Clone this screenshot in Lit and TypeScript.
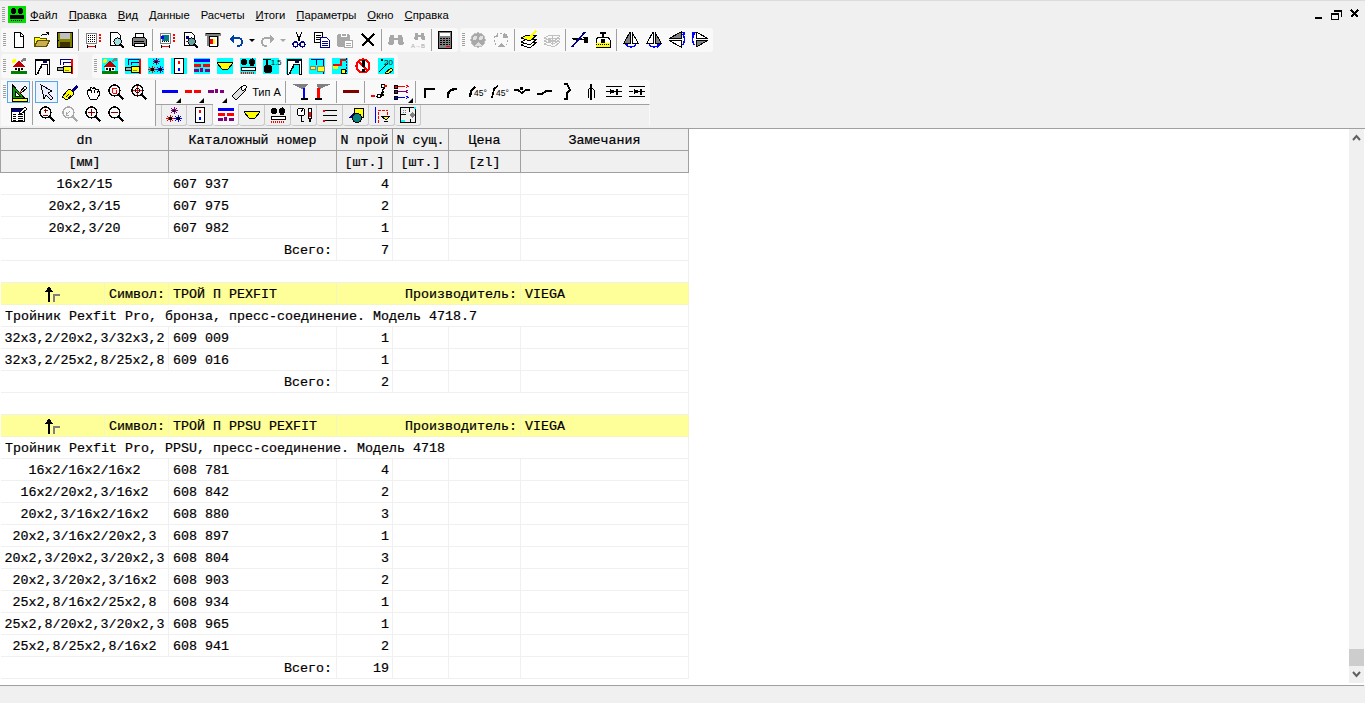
import { LitElement, html, svg, css, TemplateResult } from 'lit';
import { customElement } from 'lit/decorators.js';

const K = '#000';
const R = '#f00';
const B = '#00f';
const C = '#0ff';
const Y = '#ff0';
const G = '#808080';
const L = '#c0c0c0';
const M = '#800080';
const N = '#000080';
const P = '#a8a8a8';

const cy = (s: TemplateResult) => svg`<rect width="16" height="16" fill=${C}/>${s}`;

const mag = (inner: TemplateResult | string = '', c = K, fill = 'none') => svg`
  <circle cx="6.5" cy="6.5" r="5.5" fill=${fill} stroke=${c} stroke-width="1.4"/>
  <path d="M10.5 10.5l5 5" stroke=${c} stroke-width="2.4"/>${inner}`;

const house = svg`
  <circle cx="3" cy="3" r="2" fill=${Y}/><path d="M10 4l3-3M12 1h2v2" stroke=${G} stroke-width="1.5"/>
  <path d="M8 3l7 6H1z" fill="#c00000"/><rect x="3" y="9" width="10" height="4" fill="#fff"/>
  <rect x="7" y="10" width="2" height="3" fill=${K}/><rect x="4" y="10" width="2" height="2" fill=${K}/><rect x="10" y="10" width="2" height="2" fill=${K}/>
  <rect y="13" width="16" height="3" fill="#008000"/>`;
const plan = svg`
  <path d="M1 1h14v15h-2V6H8L3 16H1z" fill="#fff" stroke=${K}/><rect x="1" y="1" width="14" height="2" fill=${K}/>
  <path d="M8 8q-3 3-4 8M13 7v9" stroke=${K} fill="none"/><rect x="9" y="3" width="4" height="2" fill=${N}/>`;
const fit = svg`
  <path d="M3.500 7V1.500h11M6.500 7V4.500h8" stroke=${N} fill="none"/><path d="M14.500 1v15" stroke=${R} stroke-width="2"/>
  <rect x="6" y="8" width="8" height="6" fill=${Y} stroke=${K}/><rect x="0" y="9" width="6" height="3" fill="#b0b0a0" stroke=${K}/>
  <path d="M8 12h4" stroke=${G}/>`;
const stars = svg`
  <path d="M8 0v7M5 1l6 5M5 6l6-5M4.500 3.500h7" stroke=${M}/>
  <path d="M4 8v7M1 9l6 5M1 14l6-5M0 11.500h8" stroke=${R}/><path d="M12 8v7M9 9l6 5M9 14l6-5M8 11.500h8" stroke=${B}/>
  <rect x="7" y="3" width="2" height="2" fill=${K}/><rect x="3" y="10" width="3" height="3" fill=${K}/><rect x="11" y="10" width="3" height="3" fill=${K}/>`;
const door = svg`<rect x="3.500" y=".5" width="9" height="15" fill="#fff" stroke=${K}/><rect x="7" y="3" width="2" height="3" fill=${R}/><rect x="7" y="10" width="2" height="3" fill=${B}/>`;
const lines = svg`
  <rect y="1" width="16" height="3" fill=${B}/><rect y="6" width="7" height="3" fill=${R}/><rect x="9" y="6" width="7" height="3" fill=${R}/>
  <rect y="11" width="5" height="3" fill=${M}/><rect x="11" y="11" width="5" height="3" fill=${M}/>
  <path d="M6 14l1-4 1 4 1-4" stroke=${M} fill="none"/>`;
const bowl = svg`<path d="M0 4.500h16" stroke=${K}/><path d="M0 5h16L10 12H6z" fill=${Y}/><path d="M0 5l5 6h6l5-6" fill="none" stroke=${K}/>`;
const boiler = svg`
  <circle cx="4" cy="4" r="3.200" fill=${K}/><path d="M12 0l3 3-1 5h-4L9 3z" fill=${K}/><circle cx="12" cy="4" r="3.200" fill=${K}/>
  <rect x="1" y="9.500" width="14" height="3" fill="#fff" stroke=${K}/><path d="M1 14.500h14" stroke=${R} stroke-dasharray="1 1" stroke-width="2"/>`;
const gauge = svg`
  <circle cx="5" cy="5" r="4" fill="#fff" stroke=${K}/><path d="M5 5l2-3M5 9v5h3" stroke=${K} fill="none"/>
  <rect x="12" y="1" width="3" height="10" fill="#fff" stroke=${K}/><rect x="13" y="5" width="2" height="5" fill=${R}/><path d="M13.500 11v4" stroke=${K} stroke-width="2"/>`;
const list = svg`<path d="M1 3.500h14M1 8.500h14M1 13.500h14" stroke=${K} stroke-width="1.600"/><rect x="1" y="3" width="2" height="2" fill=${R}/><rect x="1" y="13" width="2" height="2" fill=${R}/>`;
const shapes = svg`
  <rect x="6" y="1" width="9" height="9" fill=${Y} stroke=${K}/><path d="M0 11l6-5v5z" fill=${N}/>
  <circle cx="9" cy="11" r="4.500" fill="#008080" stroke=${K}/>`;
const hydrant = svg`
  <path d="M1.500 0v16" stroke=${B}/><path d="M4.500 16V3h9v5" stroke=${R} fill="none" stroke-dasharray="3 1"/>
  <path d="M7 9h9l-4 4z" fill=${Y} stroke=${K}/><path d="M10 14h4" stroke=${K}/>`;
const floor = svg`
  <rect x=".5" y=".5" width="15" height="15" fill="#f0f0f0" stroke=${K}/><path d="M9.500 1v4M1 7.500h5M10 12v4" stroke=${K}/>
  <path d="M3 3h4M3 5h4" stroke=${G} stroke-dasharray="1 1"/><path d="M9 8l3-3 3 3-3 3z" fill=${G}/>
  <path d="M1 14h4M14 1h2" stroke=${C} stroke-width="2"/>`;
const page = svg`<path d="M2.500.5h7l3 3v10h-10z" fill="#fff" stroke=${K}/>`;
const gridp = svg`
  <rect x="1.500" y="1.500" width="10" height="10" fill="#fff" stroke=${G}/>
  <path d="M3 3.500h7M3 5.500h7M3 7.500h7M3 9.500h7" stroke=${K} stroke-dasharray="1 1"/>
  <path d="M14.500 2v8" stroke=${R} stroke-dasharray="2 1" stroke-width="2"/><path d="M2 14.500h9" stroke=${R}/>
  <path d="M2.500 13v3M10.500 13v3" stroke=${K}/>`;
const mirrorV = (flip: boolean) => svg`
  <g transform=${flip ? 'matrix(-1 0 0 1 16 0)' : ''}>
    <path d="M7 0L1 11h6z" fill=${G} stroke=${K}/><path d="M9 0l6 11H9z" fill="#fff" stroke=${K}/>
    <path d="M3 13q5 4 10 0" fill="none" stroke=${B} stroke-width="1.500"/><path d="M1 12h4v4z" fill=${B}/>
  </g>`;
const mirrorH = (flip: boolean) => svg`
  <g transform=${flip ? 'matrix(-1 0 0 1 16 0)' : ''}>
    <path d="M12 0L0 6.500h12z" fill=${flip ? '#fff' : G} stroke=${K}/><path d="M12 8.500H0L12 15z" fill=${flip ? G : '#fff'} stroke=${K}/>
    <path d="M14 2q3 5.500 0 11" fill="none" stroke=${B} stroke-width="1.600"/><path d="M12 0h4v4z" fill=${B}/>
  </g>`;
const t = (x: number, y: number, s: string, size = 7, c = K) =>
  svg`<text x=${x} y=${y} font-size=${size} fill=${c} font-family="Liberation Sans, sans-serif">${s}</text>`;
const bino = svg`
  <path d="M2 3h4v3h4V3h4l2 9h-6V8H6v4H0z" fill=${P}/><circle cx="3" cy="11" r="2.500" fill=${P}/><circle cx="13" cy="11" r="2.500" fill=${P}/>`;

const icons: Record<string, TemplateResult> = {
  new: svg`<path d="M3.500.5h6l3 3v12h-9z" fill="#fff" stroke=${K}/><path d="M9.500 1v3h3" fill="none" stroke=${K}/>`,
  open: svg`
    <path d="M.5 14.500V5.500h5l1 1h6v2" fill=${Y} stroke="#605000"/><path d="M.5 14.500l3-6h12l-3 6z" fill="#c8b050" stroke="#605000"/>
    <path d="M7 4q3-3 6-1" fill="none" stroke=${K}/><path d="M12 0h3v4z" fill=${K}/>`,
  save: svg`
    <rect x=".5" y=".5" width="15" height="15" fill="#808000" stroke=${K}/><rect x="3" y="1" width="10" height="6" fill=${L}/>
    <rect x="3" y="10" width="10" height="5" fill="#403000"/><rect x="1" y="8" width="1" height="1" fill=${K}/>`,
  gridp,
  prev: svg`${page}<g transform="translate(5 5) scale(.7)">${mag('', K, '#a0e0e0')}</g>`,
  print: svg`
    <path d="M4 1h8v5H4z" fill="#fff" stroke=${K}/><path d="M1 7l2-2h10l2 2v6H1z" fill=${G} stroke=${K}/>
    <rect x="3" y="9" width="10" height="1" fill=${K}/><rect x="3" y="11" width="10" height="3" fill="#fff" stroke=${K}/>`,
  gridc: svg`${gridp}<rect x="3" y="3" width="7" height="6" fill="#008080"/><rect x="2" y="4" width="3" height="3" fill=${B}/>`,
  prevc: svg`${page}<rect x="4" y="4" width="3" height="3" fill=${N}/><path d="M4 9h3" stroke=${R}/><g transform="translate(5 5) scale(.7)">${mag('', K, '#60a0a0')}</g>`,
  plot: svg`
    <path d="M0 1h16v3h-2v10h-2V4H4v10H2V4H0z" fill=${G}/><rect x="4" y="4" width="8" height="10" fill="#fff" stroke=${K}/>
    <rect x="5" y="7" width="3" height="5" fill=${R}/><rect x="8" y="7" width="2" height="5" fill=${Y}/><rect x="1" y="1" width="14" height="1" fill=${K}/>`,
  undo: svg`<path d="M5 6h6q4 1 3 5t-5 3" fill="none" stroke="#0040a0" stroke-width="1.600"/><path d="M1 7l5-4v8z" fill="#0040a0"/>`,
  redo: svg`<path d="M11 6H5q-4 1-3 5t5 3" fill="none" stroke=${P} stroke-width="1.600"/><path d="M15 7l-5-4v8z" fill=${P}/>`,
  cut: svg`
    <path d="M5 0l4 9M11 0L7 9" stroke=${K}/><circle cx="4.500" cy="12.500" r="2.500" fill="none" stroke=${N} stroke-width="1.300"/>
    <circle cx="11.500" cy="12.500" r="2.500" fill="none" stroke=${N} stroke-width="1.300"/>`,
  copy: svg`
    <rect x=".5" y=".5" width="8" height="10" fill="#fff" stroke=${K}/><path d="M2 3h5M2 5h5M2 7h5" stroke=${K}/>
    <path d="M6.500 5.500h6l3 3v7h-9z" fill="#fff" stroke=${N}/><path d="M8 9h6M8 11h6M8 13h6" stroke=${N}/>`,
  paste: svg`
    <rect x=".5" y="2.500" width="12" height="12" rx="2" fill=${P} stroke=${P}/><rect x="4" y="1" width="5" height="3" fill=${P} stroke="#fff"/>
    <rect x="7.500" y="8.500" width="8" height="7" fill="#fff" stroke=${P}/><path d="M9 11h5M9 13h5" stroke=${P}/>`,
  del: svg`<path d="M2 2l12 12M14 2L2 14" stroke=${K} stroke-width="2.400"/>`,
  find: bino,
  findr: svg`<g transform="translate(3 -1) scale(.7)">${bino}</g>${t(0, 16, 'A→B', 6, P)}`,
  calc: svg`
    <rect x="1.500" y="-.5" width="13" height="17" rx="1" fill=${G} stroke=${K}/><rect x="3" y="1" width="10" height="3" fill="#fff"/>
    <path d="M3 6.500h10M3 8.500h10M3 10.500h10M3 12.500h10" stroke=${K} stroke-dasharray="2 1"/><path d="M9 14.500h4" stroke=${R}/>`,
  ghost1: svg`<circle cx="8" cy="8" r="7.200" fill=${P} stroke=${L}/><circle cx="5" cy="6" r="2" fill="#e0e0e0"/><circle cx="11" cy="6" r="2" fill="#e0e0e0"/><path d="M4 14l4-4 4 4z" fill="#e0e0e0"/>`,
  ghost2: svg`<circle cx="8" cy="8" r="7" fill="none" stroke=${P} stroke-dasharray="2 2"/><circle cx="12" cy="4" r="2.500" fill=${P}/><circle cx="4" cy="4" r="1" fill=${P}/><path d="M4 15l4-4 4 4z" fill=${P}/>`,
  layers: svg`
    <path d="M0 13l6-3h10l-6 5H6z" fill="#fff" stroke=${K}/><path d="M0 10l6-3h10l-6 5H6z" fill="#fff" stroke=${K}/>
    <path d="M0 6l6-3h10l-6 5H6z" fill=${Y} stroke=${K}/><path d="M9 5l6-6" stroke=${Y} stroke-width="2.500"/>`,
  layersg: svg`
    <path d="M0 12l6-3 10 1-6 5z" fill="none" stroke=${L}/><path d="M0 9l6-3 10 1-6 5z" fill="none" stroke=${L}/><path d="M0 6l6-3 10 1-6 5z" fill="none" stroke=${L}/>
    <path d="M8 3v10M4 8h8" stroke=${L}/>`,
  tool: svg`
    <path d="M0 6h9l3-1h4v6h-4V8H1z" fill=${K}/><path d="M0 15L13 0" stroke=${N} stroke-width="1.800"/><rect x="10" y="6" width="2" height="1" fill="#fff"/>`,
  jar: svg`
    <path d="M3 5h10l2 3v7H1V8z" fill="#fff" stroke=${K}/><rect x="1" y="11" width="14" height="4" fill=${Y}/><path d="M1 12.500h14" stroke=${K} stroke-dasharray="1 1"/>
    <rect x="5" y="0" width="6" height="2" fill=${K}/><rect x="7" y="2" width="2" height="3" fill=${K}/><rect x="6" y="7" width="4" height="4" fill=${K}/>`,
  mv1: mirrorV(false),
  mv2: mirrorV(true),
  mh1: mirrorH(false),
  mh2: mirrorH(true),
  house,
  plan,
  fit,
  chouse: cy(house),
  cfit: cy(fit),
  cstars: cy(stars),
  cdoor: cy(door),
  clines: cy(lines),
  cbowl: cy(bowl),
  cboiler: cy(boiler),
  ct15: cy(svg`<path d="M0 1.500h8M4 2v6" stroke=${K} stroke-width="1.400"/><circle cx="5" cy="11" r="4.500" fill=${K}/>${t(8, 7, '1.5', 7.500)}`),
  cplan: cy(plan),
  cfit2: cy(svg`<path d="M1.500 1.500h13v14M7.500 1v6" stroke=${N} fill="none"/><rect x="8" y="8" width="7" height="5" fill=${Y} stroke=${G}/><rect x="1" y="8" width="5" height="3" fill=${Y} stroke=${G}/>`),
  criser: cy(svg`<path d="M1 7h8V2h3M12 2h2" stroke=${R} stroke-width="1.400" fill="none"/><path d="M14.500 0v16" stroke=${N} stroke-dasharray="2 1"/><rect x="9" y="11" width="4" height="4" fill=${Y} stroke=${K}/><rect x="1" y="8" width="5" height="3" fill=${Y}/>`),
  no: svg`<circle cx="8" cy="8" r="6.500" fill="#fff" stroke=${R} stroke-width="2.200"/><path d="M3 3l10 10" stroke=${R} stroke-width="2"/><rect x="7" y="2" width="3" height="7" fill=${K}/><rect x="7" y="11" width="3" height="3" fill=${K}/>`,
  cdim: cy(svg`<path d="M1 14L10 5" stroke=${K}/><path d="M7 15l6-5 2 2-5 4z" fill=${Y} stroke=${K}/><rect x="3" y="1" width="2" height="2" fill=${K}/>${t(6, 7, '20', 8)}`),
  draw: svg`
    <path d="M1.500 15V1l13 14z" fill="#00a000" stroke=${K}/><path d="M4 12V7l5 5z" fill="#f9f9f9" stroke=${K}/>
    <rect x="1" y="14" width="15" height="3" fill=${Y} stroke=${K}/><path d="M9 8l5-6 2 2-6 5z" fill="#fff" stroke=${K}/><path d="M9 8l1 1" stroke=${R} stroke-width="2"/>`,
  pick: svg`<path d="M2 1l11 6-4 2 5 5-2 2-5-5-2 4z" fill="#e8e8ff" stroke=${K}/>`,
  brush: svg`<path d="M9 6l5-5 2 2-5 5z" fill=${N}/><path d="M8 5l4 4-1 2-6 5-5-3 6-7z" fill=${Y} stroke=${K}/><path d="M7 10l-3 3M9 11l-3 3" stroke=${K}/>`,
  hand: svg`<path d="M2 8l2-3 1 2 1-4 2 2 1-2 2 3 2-1 2 5-3 5H5l-2-4z" fill="#fff" stroke=${K}/><path d="M6 6v3M9 6v3M12 7v2" stroke=${K}/>`,
  zsel: mag(svg`<path d="M4 9V4h5M5 9h3V6" stroke=${R} fill="none"/>`),
  zc: mag(svg`<path d="M6.500 2v9M2 6.500h9" stroke=${R} stroke-width="1.400"/><circle cx="6.500" cy="6.500" r="2" fill="none" stroke=${K}/>`),
  table: svg`
    <rect x=".5" y="2.500" width="13" height="13" fill="#fff" stroke=${K}/><rect x="1" y="3" width="12" height="3" fill=${N}/>
    <path d="M2 8h3M2 10h3M2 12h3M2 14h3M7 8h5M7 10h5M7 12h5M7 14h5" stroke=${K}/><path d="M8 7l6-6 2 2-6 5z" fill="#fff" stroke=${K}/>`,
  zpm: mag(svg`<path d="M6.500 2.500v4M4.500 4.500h4M4 9h5" stroke="#800000"/>`),
  zprev: mag(svg`<path d="M4 9l4-4M4 6v3h3" stroke=${P} fill="none"/>`, P),
  zplus: mag(svg`<path d="M6.500 3v7M3 6.500h7" stroke="#800000" stroke-width="1.300"/>`),
  zminus: mag(svg`<path d="M3 6.500h7" stroke="#800000" stroke-width="1.400"/>`),
  lblue: svg`<rect y="6" width="16" height="3" fill=${B}/>`,
  lred: svg`<rect y="6" width="7" height="3" fill=${R}/><rect x="9" y="6" width="7" height="3" fill=${R}/>`,
  lpur: svg`<rect y="6" width="6" height="3" fill=${M}/><rect x="12" y="6" width="4" height="3" fill=${M}/><path d="M7 9l1-4 1 4 1-4" stroke=${M} fill="none"/>`,
  pipe: svg`<path d="M1 12L11 2l4 4L5 16z" fill="#e0e0e0" stroke=${K}/><ellipse cx="13" cy="4" rx="2" ry="3" transform="rotate(45 13 4)" fill="#fff" stroke=${K}/>`,
  tb: svg`<path d="M0 0h16l-4 5h-2z" fill=${G}/><rect x="11" y="4" width="2" height="10" fill=${B}/><rect x="9" y="14" width="7" height="2" fill=${K}/>`,
  tr: svg`<path d="M2 0h14L5 5H3z" fill=${G}/><rect x="2" y="4" width="3" height="10" fill=${R}/><rect x="0" y="14" width="7" height="2" fill=${K}/>`,
  ldr: svg`<rect y="6" width="16" height="3" fill="#800000"/>`,
  node: svg`
    <path d="M2 12h5M9 12h3V4M12 4h2" stroke=${K} stroke-dasharray="2 1"/><rect x="0" y="11" width="4" height="2" fill=${R}/><rect x="6.500" y="10.500" width="3" height="3" fill="#fff" stroke=${K}/>
    <rect x="10.500" y=".5" width="3" height="3" fill="#fff" stroke=${K}/><rect x="13" y="1" width="3" height="2" fill=${R}/>`,
  tree: svg`
    <rect x="0" y="1" width="3" height="3" fill=${R} stroke=${K}/><rect x="0" y="6" width="3" height="3" fill=${M} stroke=${K}/><rect x="0" y="12" width="3" height="3" fill=${B} stroke=${K}/>
    <path d="M4 2.500h7M12 1l2 1.500-2 1.500" stroke=${R} fill="none"/><path d="M4 7.500h7M14 6l-2 1.500 2 1.500" stroke=${M} fill="none"/><path d="M4 13.500h7M12 12l2 1.500-2 1.500" stroke=${B} fill="none"/>`,
  c1: svg`<path d="M3 14V5h10" fill="none" stroke=${K} stroke-width="2.400"/>`,
  c2: svg`<path d="M3 14V11q0-6 9-6" fill="none" stroke=${K} stroke-width="2.400"/>`,
  a1: svg`<path d="M2 13l1-6 4-4" fill="none" stroke=${K} stroke-width="2.200"/>${t(6, 12, '45°', 8.500)}`,
  a2: svg`<path d="M1 14l2-9 4-3" fill="none" stroke=${K} stroke-width="1.800"/>${t(5, 12, '45°', 8.500)}`,
  dip: svg`<path d="M0 6h4l4 3 4-3h4" fill="none" stroke=${K} stroke-width="1.800"/><rect x="6" y="3" width="3" height="3" fill=${K}/>`,
  step: svg`<path d="M0 10h5l4-3h6" fill="none" stroke=${K} stroke-width="2"/>`,
  bend: svg`<path d="M4 0h3l3 6-3 3v6H4" fill="none" stroke=${K} stroke-width="2"/>`,
  valve: svg`<path d="M8 0v16" stroke=${K} stroke-width="2"/><path d="M5 14V6l3-3 3 3v8" fill="none" stroke=${K}/>`,
  v1: svg`<path d="M0 2.500h16M0 12.500h16M0 7.500h4M12 7.500h4" stroke=${K}/><path d="M4 5l6 2.500L4 10z" fill=${K}/><rect x="10" y="5" width="2" height="6" fill=${K}/>`,
  v2: svg`<path d="M0 2.500h16M0 12.500h16M0 7.500h4M12 7.500h4" stroke=${K}/><path d="M5 5l6 2.500L5 10z" fill=${K}/><rect x="11" y="5" width="2" height="6" fill=${K}/>`,
  symbol: svg`<path d="M3 16V6H0l4-6 4 6H5v10z" fill=${K}/><path d="M9 16V9h6" fill="none" stroke=${G} stroke-width="2"/>`,
};

const ic = (name: string) => html`<svg class="ic" viewBox="0 0 16 16" width="16" height="16">${icons[name]}</svg>`;

// toolbar token: icon name, '|' separator, '!' narrow separator, 'v'/'vg' drop arrow, '^x' icon with a corner mark
const bar = (items: string[]) => items.map((it) => {
  if (it === '|') return html`<span class="sep"></span>`;
  if (it === '!') return html`<span class="sep narrow"></span>`;
  if (it === 'v' || it === 'vg') return html`<span class="drop ${it === 'vg' ? 'off' : 'wide'}"></span>`;
  if (it === 'type') return html`<span class="typea">Тип А</span>`;
  if (it[0] === '^') return html`<span class="btn">${ic(it.slice(1))}<i class="mark"></i></span>`;
  if (it[0] === '*') return html`<span class="btn on">${ic(it.slice(1))}</span>`;
  return html`<span class="btn">${ic(it)}</span>`;
});

const menu = ['Файл', 'Правка', 'Вид', 'Данные', 'Расчеты', 'Итоги', 'Параметры', 'Окно', 'Справка'];

type Row =
  | { k: 'd'; dn: string; cat: string; n: string }
  | { k: 't'; n: string }
  | { k: 'b' }
  | { k: 's'; sym: string; mfr: string }
  | { k: 'x'; text: string };

const rows: Row[] = [
  { k: 'd', dn: '16x2/15', cat: '607 937', n: '4' },
  { k: 'd', dn: '20x2,3/15', cat: '607 975', n: '2' },
  { k: 'd', dn: '20x2,3/20', cat: '607 982', n: '1' },
  { k: 't', n: '7' },
  { k: 'b' },
  { k: 's', sym: 'ТРОЙ П PEXFIT', mfr: 'VIEGA' },
  { k: 'x', text: 'Тройник Pexfit Pro, бронза, пресс-соединение. Модель 4718.7' },
  { k: 'd', dn: '32x3,2/20x2,3/32x3,2', cat: '609 009', n: '1' },
  { k: 'd', dn: '32x3,2/25x2,8/25x2,8', cat: '609 016', n: '1' },
  { k: 't', n: '2' },
  { k: 'b' },
  { k: 's', sym: 'ТРОЙ П PPSU PEXFIT', mfr: 'VIEGA' },
  { k: 'x', text: 'Тройник Pexfit Pro, PPSU, пресс-соединение. Модель 4718' },
  { k: 'd', dn: '16x2/16x2/16x2', cat: '608 781', n: '4' },
  { k: 'd', dn: '16x2/20x2,3/16x2', cat: '608 842', n: '2' },
  { k: 'd', dn: '20x2,3/16x2/16x2', cat: '608 880', n: '3' },
  { k: 'd', dn: '20x2,3/16x2/20x2,3', cat: '608 897', n: '1' },
  { k: 'd', dn: '20x2,3/20x2,3/20x2,3', cat: '608 804', n: '3' },
  { k: 'd', dn: '20x2,3/20x2,3/16x2', cat: '608 903', n: '2' },
  { k: 'd', dn: '25x2,8/16x2/25x2,8', cat: '608 934', n: '1' },
  { k: 'd', dn: '25x2,8/20x2,3/20x2,3', cat: '608 965', n: '1' },
  { k: 'd', dn: '25x2,8/25x2,8/16x2', cat: '608 941', n: '2' },
  { k: 't', n: '19' },
];

const tabArt: TemplateResult[] = [stars, door, lines, bowl, boiler, gauge, list, shapes, hydrant, floor];

@customElement('app-root')
export class AppRoot extends LitElement {
  static styles = css`
    :host {
      display: flex;
      flex-direction: column;
      height: 703px;
      overflow: hidden;
      background: #f0f0f0;
      border-top: 1px solid #dcdcdc;
      box-sizing: border-box;
      font-family: 'Liberation Sans', sans-serif;
      color: #000;
    }
    .menubar {
      display: flex;
      align-items: center;
      height: 27px;
      flex: none;
      font-size: 11.25px;
    }
    .menubar .grip { height: 16px; margin: 0 3px 0 2px; }
    .logo { flex: none; width: 18px; height: 17px; margin-right: 4px; }
    .menu { white-space: nowrap; }
    .menu + .menu { margin-left: 11px; }
    .winctl { margin-left: auto; display: flex; }
    .winctl svg { display: block; }

    .tools { display: flex; flex: none; height: 24px; margin-bottom: 2px; padding-left: 1px; }
    .band {
      display: flex;
      align-items: center;
      background: #f9f9f9;
      border-radius: 3px;
      padding-right: 2px;
      height: 24px;
      box-sizing: border-box;
    }
    .band + .band { margin-left: 2px; }
    .band.apart { margin-left: 14px; padding-right: 1px; }
    .grip {
      flex: none;
      width: 3px;
      height: 14px;
      margin: 0 1px 0 2px;
      background: repeating-linear-gradient(#a0a0a0 0 1px, transparent 1px 2px);
    }
    .btn {
      position: relative;
      flex: none;
      width: 23px;
      height: 22px;
      display: flex;
      align-items: center;
      justify-content: center;
      box-sizing: border-box;
    }
    .btn.on { background: #eef4fc; border: 1px solid #55a5f0; }
    .ic { display: block; overflow: visible; shape-rendering: crispEdges; }
    .mark {
      position: absolute;
      right: 0;
      bottom: 0;
      border-style: solid;
      border-width: 0 0 5px 5px;
      border-color: transparent transparent #000 transparent;
    }
    .sep { flex: none; width: 5px; height: 22px; display: flex; justify-content: center; }
    .sep::before { content: ''; width: 1px; background: #a0a0a0; }
    .sep.narrow { width: 3px; }
    .drop { flex: none; width: 8px; display: flex; justify-content: center; }
    .drop.wide { width: 9px; }
    .drop::before {
      content: '';
      border-style: solid;
      border-width: 3px 3px 0 3px;
      border-color: #000 transparent transparent transparent;
    }
    .drop.off::before { border-top-color: #a8a8a8; }
    .typea { flex: none; width: 33px; font-size: 11px; text-align: center; white-space: nowrap; }

    .tools3 { display: flex; flex: none; height: 46px; margin-bottom: 2px; padding-left: 1px; }
    .left {
      flex: none;
      width: 154px;
      height: 45px;
      padding-top: 1px;
      background: #f9f9f9;
      border-right: 1px solid #a0a0a0;
      display: grid;
      grid-template-columns: 6px 23px 5px repeat(5, 23px);
      grid-template-rows: 22px 22px;
    }
    .left .grip { align-self: center; }
    .left .vsep { grid-column: 3; grid-row: 1 / 3; justify-self: center; width: 1px; background: #a0a0a0; }
    .right { flex: none; width: 494px; display: flex; flex-direction: column; }
    .top {
      display: flex;
      align-items: center;
      height: 24px;
      flex: none;
      background: #f9f9f9;
      padding-left: 2px;
      border-radius: 0 3px 0 0;
    }
    .tabs {
      flex: none;
      height: 21px;
      border-top: 1px solid #a0a0a0;
      border-right: 1px solid #f9f9f9;
      display: flex;
      padding-left: 5px;
    }
    .tab {
      flex: none;
      width: 26px;
      box-sizing: border-box;
      border: 1px solid #c8c8c8;
      border-top: 0;
      border-left: 0;
      border-radius: 0 0 3px 3px;
      display: flex;
      align-items: center;
      justify-content: center;
    }
    .tab:first-child { border-left: 1px solid #c8c8c8; }
    .tab.active { background: #f9f9f9; margin-top: -1px; }

    .main { flex: 1; min-height: 0; display: flex; background: #fff; border-top: 1px solid #a0a0a0; }
    .sheet {
      flex: 1;
      min-width: 0;
      overflow: hidden;
      font-family: 'Liberation Mono', monospace;
      font-size: 13.33px;
      -webkit-text-stroke: 0.2px #000;
    }
    .row {
      display: grid;
      grid-template-columns: 168px 168px 56px 56px 72px 168px;
      width: 688px;
      height: 22px;
      margin-left: 1px;
    }
    .cell {
      box-sizing: border-box;
      height: 22px;
      line-height: 23px;
      padding: 0 3px;
      white-space: pre;
      overflow: hidden;
      border-right: 1px solid #f0f0f0;
      border-bottom: 1px solid #f0f0f0;
    }
    .c { text-align: center; padding: 0; }
    .l { padding-left: 4px; }
    .r { text-align: right; }
    .w2 { grid-column: span 2; padding-right: 4px; }
    .all { grid-column: 1 / -1; }
    .head .cell { background: #f0f0f0; border-color: #a0a0a0; }
    .head { box-shadow: -1px 0 0 #a0a0a0; }
    .sym { grid-template-columns: 104px 64px 168px 184px 168px; background: #ff9; }
    .sym .cell { border-color: #f5f5c0; }
    .symicon { display: flex; align-items: center; justify-content: center; padding: 0; }

    .scroll { flex: none; width: 15px; margin: 0 1px 2px 0; display: flex; flex-direction: column; background: #f0f0f0; }
    .arrow { flex: none; height: 17px; display: flex; align-items: center; justify-content: center; }
    .thumb { flex: none; height: 17px; margin-top: auto; background: #cdcdcd; }

    .status { flex: none; height: 17px; border-top: 1px solid #a0a0a0; margin-right: 1px; background: #f0f0f0; }
  `;

  private row(r: Row) {
    switch (r.k) {
      case 'd':
        return html`<div class="row">
          <div class="cell c">${r.dn}</div>
          <div class="cell l">${r.cat}</div>
          <div class="cell r">${r.n}</div>
          <div class="cell"></div><div class="cell"></div><div class="cell"></div>
        </div>`;
      case 't':
        return html`<div class="row">
          <div class="cell r w2">Всего:</div>
          <div class="cell r">${r.n}</div>
          <div class="cell"></div><div class="cell"></div><div class="cell"></div>
        </div>`;
      case 'b':
        return html`<div class="row"><div class="cell all"></div></div>`;
      case 's':
        return html`<div class="row sym">
          <div class="cell symicon">${ic('symbol')}</div>
          <div class="cell r">Символ:</div>
          <div class="cell l">${r.sym}</div>
          <div class="cell r">Производитель:</div>
          <div class="cell l">${r.mfr}</div>
        </div>`;
      case 'x':
        return html`<div class="row"><div class="cell all l">${r.text}</div></div>`;
    }
  }

  render() {
    return html`
      <div class="menubar">
        <span class="grip"></span>
        <svg class="logo" viewBox="0 0 18 17" shape-rendering="crispEdges">
          <rect width="18" height="17" fill="#00e000"/>
          <circle cx="5.500" cy="5" r="3" fill="#000"/><circle cx="12.500" cy="5" r="3" fill="#000"/>
          <rect x="2" y="9" width="14" height="4" fill="#000"/>
          <path d="M3 14.500h12" stroke="#000" stroke-dasharray="1 1"/>
        </svg>
        ${menu.map((m, i) => html`<span class="menu">${i === 4 ? m : html`<u>${m[0]}</u>${m.slice(1)}`}</span>`)}
        <span class="winctl">
          <svg width="50" height="12" viewBox="0 0 50 12" shape-rendering="crispEdges">
            <rect x="0" y="8" width="7" height="2" fill="#000"/>
            <path d="M19.500 1.500h7v6M16.500 4.500h7v6h-7zM17 5.500h6" fill="none" stroke="#000"/>
            <path d="M19 1.500h7" stroke="#000" stroke-width="2"/>
            <path d="M36 1l7 7M43 1l-7 7" stroke="#000" stroke-width="2"/>
          </svg>
        </span>
      </div>

      <div class="tools">
        <div class="band">
          <span class="grip"></span>
          ${bar(['new', 'open', 'save', '|', 'gridp', 'prev', 'print', '|', 'gridc', 'prevc', 'plot', 'undo', 'v', 'redo', 'vg', 'cut', 'copy', 'paste', 'del', '|', 'find', 'findr', '!', 'calc'])}
        </div>
        <div class="band">
          <span class="grip"></span>
          ${bar(['ghost1', 'ghost2', '|', 'layers', 'layersg', '|', 'tool', 'jar', '|', 'mv1', 'mv2', 'mh1', 'mh2'])}
        </div>
      </div>

      <div class="tools">
        <div class="band">
          <span class="grip"></span>
          ${bar(['house', 'plan', 'fit'])}
        </div>
        <div class="band apart">
          <span class="grip"></span>
          ${bar(['chouse', 'cfit', 'cstars', 'cdoor', 'clines', 'cbowl', 'cboiler', 'ct15', 'cplan', 'cfit2', 'criser', 'no', 'cdim'])}
        </div>
      </div>

      <div class="tools3">
        <div class="left">
          <span class="grip"></span>
          ${bar(['*draw'])}
          <span class="vsep"></span>
          ${bar(['*pick', 'brush', 'hand', 'zsel', 'zc'])}
          <span></span>
          ${bar(['table', 'zpm', 'zprev', 'zplus', 'zminus'])}
        </div>
        <div class="right">
          <div class="top">
            ${bar(['^lblue', '^lred', '^lpur', 'pipe', 'type', '|', 'tb', 'tr', '|', 'ldr', '|', 'node', '^tree', '|', 'c1', 'c2', 'a1', 'a2', 'dip', 'step', 'bend', 'valve', 'v1', 'v2'])}
          </div>
          <div class="tabs">
            ${tabArt.map((art, i) => html`<span class="tab ${i === 2 ? 'active' : ''}">
              <svg class="ic" viewBox="0 0 16 16" width="16" height="16">${art}</svg>
            </span>`)}
          </div>
        </div>
      </div>

      <div class="main">
        <div class="sheet">
          <div class="row head">
            <div class="cell c">dn</div>
            <div class="cell c">Каталожный номер</div>
            <div class="cell c">N прой</div>
            <div class="cell c">N сущ.</div>
            <div class="cell c">Цена</div>
            <div class="cell c">Замечания</div>
          </div>
          <div class="row head">
            <div class="cell c">[мм]</div>
            <div class="cell c"></div>
            <div class="cell c">[шт.]</div>
            <div class="cell c">[шт.]</div>
            <div class="cell c">[zl]</div>
            <div class="cell c"></div>
          </div>
          ${rows.map((r) => this.row(r))}
        </div>
        <div class="scroll">
          <div class="arrow">
            <svg width="9" height="7" viewBox="0 0 9 7"><path d="M1 6l3.500-4L8 6" fill="none" stroke="#606060" stroke-width="2"/></svg>
          </div>
          <div class="thumb"></div>
          <div class="arrow">
            <svg width="9" height="7" viewBox="0 0 9 7"><path d="M1 1l3.500 4L8 1" fill="none" stroke="#606060" stroke-width="2"/></svg>
          </div>
        </div>
      </div>
      <div class="status"></div>
    `;
  }
}

declare global {
  interface HTMLElementTagNameMap {
    'app-root': AppRoot;
  }
}
